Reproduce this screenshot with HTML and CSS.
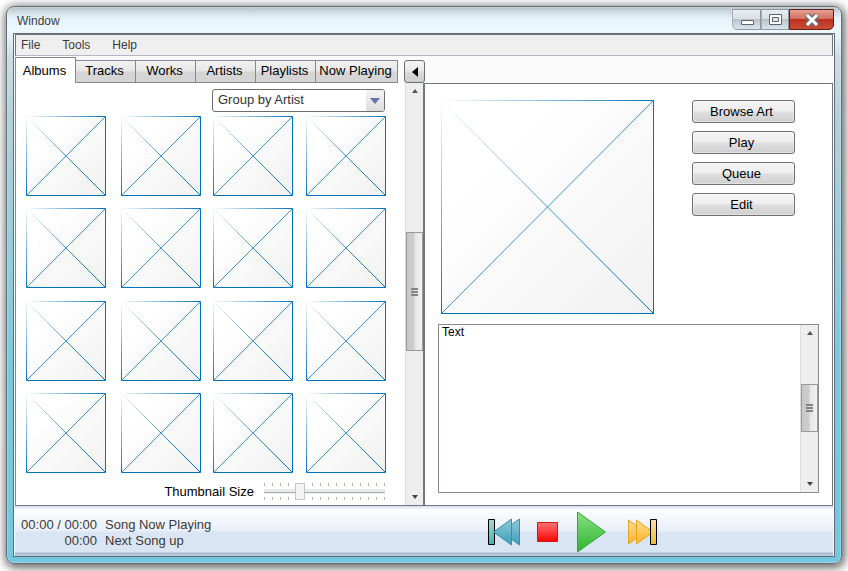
FILE: index.html
```html
<!DOCTYPE html>
<html lang="en">
<head>
<meta charset="utf-8">
<meta name="viewport" content="width=device-width, initial-scale=1">
<title>Window</title>
<link rel="stylesheet" href="styles.css">
<script src="thumbs.js" defer></script>
</head>
<body>
<svg class="defs" width="0" height="0" aria-hidden="true">
  <defs>
    <linearGradient id="fill" x1="0" y1="0" x2="1" y2="1"><stop offset=".25" stop-color="#fff"/><stop offset="1" stop-color="#f1f1f1"/></linearGradient>
    <linearGradient id="edge" gradientUnits="userSpaceOnUse" x1="0" y1="0" x2="80" y2="80"><stop offset="0" stop-color="#0072bc" stop-opacity="0"/><stop offset=".5" stop-color="#0072bc"/></linearGradient>
    <linearGradient id="cross" gradientUnits="userSpaceOnUse" x1="0" y1="0" x2="80" y2="80"><stop offset="0" stop-color="#0072bc" stop-opacity="0"/><stop offset=".5" stop-color="#0072bc" stop-opacity=".75"/><stop offset="1" stop-color="#0072bc"/></linearGradient>
    <symbol id="picture" viewBox="0 0 80 80" preserveAspectRatio="none">
      <path d="M0 0H80V80H0z" fill="url(#fill)"/>
      <path d="M1 1L79 79M79 1L1 79" stroke="url(#cross)" fill="none"/>
      <path d="M.5 .5H79.5V79.5H.5z" stroke="url(#edge)" fill="none"/>
    </symbol>
    <linearGradient id="blue" x2="0" y2="1"><stop stop-color="#91cad8"/><stop offset="1" stop-color="#3b9fbc"/></linearGradient>
    <linearGradient id="teal" x2="0" y2="1"><stop stop-color="#a7d8d3"/><stop offset="1" stop-color="#45b3b3"/></linearGradient>
    <linearGradient id="red" x2="0" y2="1"><stop stop-color="#ff7272"/><stop offset="1" stop-color="#fb0404"/></linearGradient>
    <linearGradient id="green" x2="0" y2="1"><stop stop-color="#8adf85"/><stop offset="1" stop-color="#2eb52e"/></linearGradient>
    <linearGradient id="gold" x2="0" y2="1"><stop stop-color="#ffdc91"/><stop offset="1" stop-color="#ffb322"/></linearGradient>
    <linearGradient id="sand" x2="0" y2="1"><stop stop-color="#fae1b7"/><stop offset="1" stop-color="#e9bd29"/></linearGradient>
  </defs>
</svg>

<div class="window">
  <header class="titlebar">
    <h1>Window</h1>
    <div class="caption">
      <button class="cap" aria-label="Minimize"><svg width="14" height="14"><path d="M1.500 7.500H13.500V11.500H1.500z" fill="#fff" stroke="#5d6478"/></svg></button>
      <button class="cap" aria-label="Maximize"><svg width="14" height="14"><path d="M1.500 1.500H13.500V11.500H1.500z" fill="#fff" stroke="#5d6478"/><path d="M4.500 4.500H10.500V8.500H4.500z" fill="#dfe5ea" stroke="#5d6478"/></svg></button>
      <button class="cap close" aria-label="Close"><svg width="18" height="16"><path d="M4 3L14 13M14 3L4 13" stroke="#66747a" stroke-width="6"/><path d="M4 3L14 13M14 3L4 13" stroke="#fff" stroke-width="3"/></svg></button>
    </div>
  </header>

  <div class="client">
    <nav class="menu">
      <button>File</button><button>Tools</button><button>Help</button>
    </nav>

    <div class="tabs" role="tablist">
      <button role="tab" class="tab active" aria-selected="true">Albums</button>
      <button role="tab" class="tab">Tracks</button>
      <button role="tab" class="tab">Works</button>
      <button role="tab" class="tab">Artists</button>
      <button role="tab" class="tab">Playlists</button>
      <button role="tab" class="tab wide">Now Playing</button>
      <button class="collapse" aria-label="Collapse panel"><svg width="6" height="10"><path d="M6 0V10L0 5z"/></svg></button>
    </div>

    <main class="panels">
      <section class="library">
        <div class="albums">
          <div class="picker">
            <select class="group" aria-label="Grouping"><option>Group by Artist</option></select>
            <span class="drop"><svg width="10" height="6"><path d="M0 0H10L5 6z" fill="#6674a8"/></svg></span>
          </div>
          <div class="thumbs" id="thumbs"></div>
          <div class="sizer">
            <label for="size">Thumbnail Size</label>
            <input id="size" type="range" min="0" max="100" value="28">
          </div>
        </div>
        <div class="scroll">
          <svg width="6" height="4"><path d="M0 4H6L3 0z" fill="#555"/></svg>
          <div class="track"><span class="grip"></span></div>
          <svg width="6" height="4"><path d="M0 0H6L3 4z" fill="#444"/></svg>
        </div>
      </section>

      <section class="detail">
        <div class="top">
          <svg class="art" role="img" aria-label="Album art" viewBox="0 0 213 214" preserveAspectRatio="none">
            <defs>
              <linearGradient id="artEdge" gradientUnits="userSpaceOnUse" x1="0" y1="0" x2="213" y2="214"><stop offset="0" stop-color="#0072bc" stop-opacity="0"/><stop offset=".5" stop-color="#0072bc"/></linearGradient>
              <linearGradient id="artCross" gradientUnits="userSpaceOnUse" x1="0" y1="0" x2="213" y2="214"><stop offset="0" stop-color="#0072bc" stop-opacity="0"/><stop offset=".5" stop-color="#0072bc" stop-opacity=".75"/><stop offset="1" stop-color="#0072bc"/></linearGradient>
            </defs>
            <path d="M0 0H213V214H0z" fill="url(#fill)"/>
            <path d="M0 0L213 214M213 0L0 214" stroke="url(#artCross)" fill="none"/>
            <path d="M.5 .5H212.5V213.5H.5z" stroke="url(#artEdge)" fill="none"/>
          </svg>
          <div class="actions">
            <button>Browse Art</button><button>Play</button><button>Queue</button><button>Edit</button>
          </div>
        </div>
        <div class="notes">
          <textarea aria-label="Notes">Text</textarea>
          <div class="scroll">
            <svg width="6" height="4"><path d="M0 4H6L3 0z" fill="#555"/></svg>
            <div class="track"><span class="grip short"></span></div>
            <svg width="6" height="4"><path d="M0 0H6L3 4z" fill="#444"/></svg>
          </div>
        </div>
      </section>
    </main>

    <footer class="status">
      <dl class="songs">
        <dt>00:00 / 00:00</dt><dd>Song Now Playing</dd>
        <dt>00:00</dt><dd>Next Song up</dd>
      </dl>
      <div class="transport">
        <button aria-label="Previous"><svg width="33" height="42"><path d="M1.500 8.500H7.500V33.500H1.500z" fill="url(#teal)" stroke="#000"/><path d="M32.500 8V34L14 21z" fill="url(#blue)" stroke="#3391ad"/><path d="M24.500 8V34L6.500 21z" fill="url(#blue)" stroke="#3391ad"/></svg></button>
        <button aria-label="Stop"><svg width="21" height="42"><path d="M.5 11.500H20.500V30.500H.5z" fill="url(#red)" stroke="#d31515"/></svg></button>
        <button aria-label="Play"><svg width="29" height="42"><path d="M.5 1V41L28.500 21z" fill="url(#green)" stroke="#36a536"/></svg></button>
        <button aria-label="Next"><svg width="30" height="42"><path d="M.5 9V33L17 21z" fill="url(#gold)" stroke="#e5a323"/><path d="M8.500 9V33L25 21z" fill="url(#gold)" stroke="#e5a323"/><path d="M22.500 8.500H28.500V33.500H22.500z" fill="url(#sand)" stroke="#000"/></svg></button>
      </div>
    </footer>
  </div>
</div>
</body>
</html>
```
FILE: thumbs.js
```js
const grid = document.getElementById('thumbs');
for (let i = 0; i < 16; i++) {
  grid.insertAdjacentHTML('beforeend',
    '<svg class="thumb" role="img" aria-label="Album"><use href="#picture"/></svg>');
}
```
FILE: styles.css
```css
* { box-sizing: border-box; }

body {
  margin: 0;
  height: 100vh;
  padding: 6px 6px 7px;
  background: #fff;
  font: 13px/16px "Liberation Sans", Arial, sans-serif;
  color: #000;
  overflow: hidden;
}

button, select, textarea, input { font: inherit; color: inherit; margin: 0; }
button { padding: 0; border: 0; background: none; }
svg { display: block; flex: none; }
.defs { position: absolute; }

.window {
  height: 100%;
  display: flex;
  flex-direction: column;
  padding: 0 6px 6px;
  border: 1px solid #667075;
  border-radius: 8px;
  background: linear-gradient(#b4bfc4 0, #d3e0e6 6px, #e6f3fa 12px, #edf8ff 24px, #cbdde3 50px, #b4d1da 110px, #78c9df 65%, #72c8df);
  box-shadow: 1px 2px 10px 2px rgba(0, 0, 0, .6), inset 0 0 2px #e4f5fa;
}

.titlebar { display: flex; justify-content: space-between; height: 26px; flex: none; }
.titlebar h1 { margin: 6px 4px; font-size: 12px; line-height: 16px; font-weight: normal; color: #3c3c3c; }
.caption { display: flex; height: 21px; margin: 2px 1px 0 0; }
.cap {
  width: 28px;
  display: grid;
  place-items: center;
  border: 1px solid #8d989e;
  border-left-color: #a4adb3;
  background: linear-gradient(#e9edf0, #d9dfe3 45%, #b9c4cb 50%, #dae5eb);
}
.cap:first-child { border-bottom-left-radius: 5px; width: 29px; }
.cap.close {
  width: 45px;
  border-color: #5e1b18;
  border-bottom-right-radius: 5px;
  background: linear-gradient(#e6a092, #d3705f 45%, #bd3320 50%, #c94c33);
}

.client {
  flex: 1;
  min-height: 0;
  display: flex;
  flex-direction: column;
  padding: 0 1px;
  border: 1px solid #646b77;
  background: #fafafa;
}

.menu {
  display: flex;
  gap: 22px;
  flex: none;
  height: 22px;
  padding: 0 5px;
  border: 1px solid #6f747c;
  border-bottom-color: #b3b5c8;
  background: #efefef;
  color: #3a3a3a;
  font-size: 12px;
}

.tabs { display: flex; align-items: flex-end; flex: none; height: 27px; }
.tab {
  width: 60px;
  height: 23px;
  padding: 0 2px 2px 0;
  border: 1px solid #868792;
  border-left: 0;
  background: linear-gradient(#f2f2f2, #e6e6e6 48%, #d6d6d6 52%, #d4d4d4);
  white-space: nowrap;
}
.tab.active { width: 61px; height: 26px; padding: 0 2px 0 0; border-left: 1px solid #868792; border-bottom: 0; background: #fff; }
.tab.wide { width: 82px; }
.collapse {
  width: 21px;
  height: 23px;
  margin-left: 6px;
  display: grid;
  place-items: center;
  border: 1px solid #6d6d6d;
  border-radius: 3px;
  background: linear-gradient(#f5f5f5, #e8e8e8 48%, #dadada 52%, #ccc);
}

.panels { flex: 1; min-height: 0; display: flex; background: #fff; border-bottom: 1px solid #707784; }

.library { flex: none; display: flex; border-left: 1px solid #868792; border-right: 2px solid #707784; }
.albums { display: flex; flex-direction: column; align-items: flex-end; padding: 6px 19px 0 10px; }
.picker { display: grid; grid-template-columns: 1fr 19px; width: 173px; margin-right: 1px; }
.group {
  grid-area: 1 / 1 / 2 / 3;
  height: 23px;
  padding: 0 5px 2px;
  border: 1px solid #6d6d6d;
  border-radius: 3px;
  background: #fff;
  color: #333;
  appearance: none;
}
.drop {
  grid-area: 1 / 2;
  margin: 1px 1px 1px 0;
  display: grid;
  place-items: center;
  background: linear-gradient(#f4f4f4, #e9e9e9 50%, #ddd);
  border-radius: 0 2px 2px 0;
  pointer-events: none;
}
.thumbs {
  display: grid;
  grid-template-columns: 82px 79px 80px 80px;
  grid-template-rows: 80px 81px 80px 80px;
  gap: 12px 13px;
  margin-top: 4px;
}
.thumb { width: 80px; height: 80px; }

.sizer { display: flex; align-items: center; gap: 10px; margin: 10px 1px 0 0; }
.sizer input {
  width: 121px;
  height: 17px;
  appearance: none;
  background:
    repeating-linear-gradient(90deg, #b5b3a8 0 1px, transparent 1px 8px) 0 0 / 100% 3px no-repeat,
    repeating-linear-gradient(90deg, #b5b3a8 0 1px, transparent 1px 8px) 0 100% / 100% 3px no-repeat;
}
.sizer input::-webkit-slider-runnable-track {
  height: 17px;
  background: linear-gradient(#e9eaea 0 3px, #a9adad 3px 4px, #eee 4px 5px) 0 6px / 100% 5px no-repeat;
}
.sizer input::-webkit-slider-thumb {
  appearance: none;
  width: 10px;
  height: 17px;
  border: 1px solid #c6c6c6;
  background: #f4f4f4;
}

.scroll {
  flex: none;
  width: 18px;
  display: flex;
  flex-direction: column;
  align-items: center;
  padding: 6px 0;
  background: #eee;
  border-left: 1px solid #ddd;
}
.track { flex: 1; width: 100%; display: flex; align-items: center; }
.grip {
  width: 17px;
  height: 119px;
  margin-bottom: 5px;
  border: 1px solid #999;
  background:
    repeating-linear-gradient(#848484 0 2px, transparent 2px 3px) center / 7px 8px no-repeat,
    linear-gradient(90deg, #c8c8c8, #cdcdcd 45%, #e6e6e6 55%, #f2f2f2);
}
.grip.short { height: 48px; margin-bottom: 2px; }

.detail {
  flex: 1;
  min-width: 0;
  display: flex;
  flex-direction: column;
  gap: 10px;
  padding: 16px 13px 12px;
  border-top: 1px solid #707784;
  border-right: 1px solid #707784;
}
.top { display: flex; gap: 38px; padding-left: 3px; }
.art { width: 213px; height: 214px; }
.actions { display: flex; flex-direction: column; gap: 8px; }
.actions button {
  width: 103px;
  height: 23px;
  padding-right: 4px;
  border: 1px solid #707070;
  border-radius: 3px;
  background: linear-gradient(#f5f5f5, #ededed 48%, #dfdfdf 52%, #cfcfcf);
  box-shadow: inset 0 0 0 1px rgba(255, 255, 255, .4);
}

.notes { flex: 1; min-height: 0; display: flex; border: 1px solid #8a8a94; }
.notes textarea { flex: 1; min-width: 0; padding: 0 3px; border: 0; resize: none; outline: 0; background: none; font-size: 12px; line-height: 14px; }

.status {
  flex: none;
  display: flex;
  align-items: center;
  height: 50px;
  padding-top: 2px;
  background: linear-gradient(#d8e2ee 0 1px, #eaf0f8 2px, #fdfeff 4px, #e9eff8 24px, #dae5f3 27px, #dae5f3 46px, #a9b7ca 47px, #b9c9dc 49px);
  color: #3a3a3a;
}
.songs { flex: none; display: grid; grid-template-columns: 82px auto; gap: 0 8px; width: 472px; margin: 0; padding-top: 2px; }
.songs dt { text-align: right; }
.songs dd { margin: 0; }
.transport { display: flex; align-items: center; }
.transport button:nth-child(2) { margin: 0 19px 0 17px; }
.transport button:nth-child(4) { margin-left: 22px; }
```
